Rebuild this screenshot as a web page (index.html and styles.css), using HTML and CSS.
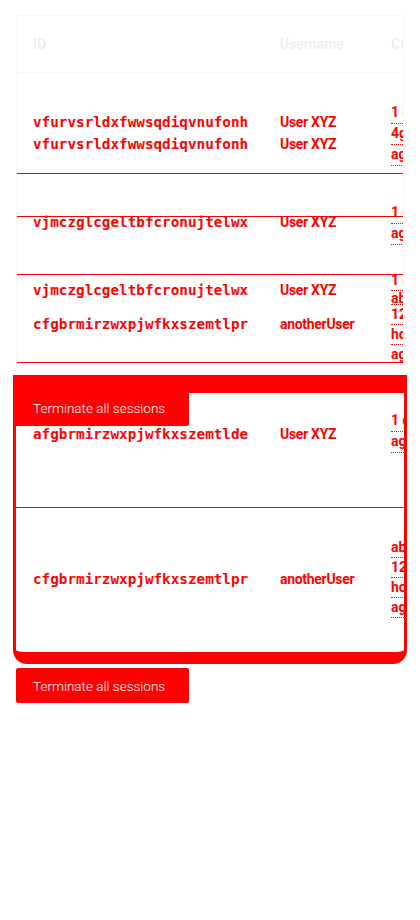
FILE: index.html
```html
<!DOCTYPE html>
<html>
<head>
<meta charset="utf-8">
<link rel="stylesheet" href="styles.css">
</head>
<body>
<div class="page">
  <div class="card">
    <div class="row head">
      <div class="c-id">ID</div>
      <div class="c-user">Username</div>
      <div class="c-cr">Created</div>
    </div>
    <div class="row r1">
      <div class="c-id"><div class="id">vfurvsrldxfwwsqdiqvnufonh</div><div class="id">vfurvsrldxfwwsqdiqvnufonh</div></div>
      <div class="c-user"><div class="id">User XYZ</div><div class="id">User XYZ</div></div>
      <div class="c-cr"><span class="dt">1 day</span><span class="dt">4g</span><span class="dt">ago</span></div>
    </div>
    <div class="row r2">
      <div class="overline"></div>
      <div class="c-id"><div class="id">vjmczglcgeltbfcronujtelwx</div></div>
      <div class="c-user"><div class="id">User XYZ</div></div>
      <div class="c-cr"><span class="dt">1 day</span><span class="dt">ago</span></div>
    </div>
    <div class="row r3">
      <div class="c-id"><div class="id">vjmczglcgeltbfcronujtelwx</div><div class="id">cfgbrmirzwxpjwfkxszemtlpr</div></div>
      <div class="c-user"><div class="id">User XYZ</div><div class="id">anotherUser</div></div>
      <div class="c-cr"><span class="dt s1">1 day</span><span class="dt s2">about</span><span class="dt">12</span><span class="dt">hours</span><span class="dt">ago</span></div>
    </div>
  </div>

  <div class="box">
    <button class="term over">Terminate all sessions</button>
    <div class="inner">
      <div class="row r4">
        <div class="c-id"><div class="id">afgbrmirzwxpjwfkxszemtlde</div></div>
        <div class="c-user"><div class="id">User XYZ</div></div>
        <div class="c-cr"><span class="dt">1 day</span><span class="dt">ago</span></div>
      </div>
      <div class="row r5">
        <div class="c-id"><div class="id">cfgbrmirzwxpjwfkxszemtlpr</div></div>
        <div class="c-user"><div class="id">anotherUser</div></div>
        <div class="c-cr"><span class="dt">about</span><span class="dt">12</span><span class="dt">hours</span><span class="dt">ago</span></div>
      </div>
    </div>
  </div>
  <button class="term bottom">Terminate all sessions</button>
</div>
</body>
</html>
```
FILE: styles.css
```css
* { box-sizing: border-box; }
html, body { margin: 0; padding: 0; background: #fff; }
body { font-family: Roboto, "Liberation Sans", sans-serif; width: 420px; height: 920px; overflow: hidden; }
.page { padding: 15px 0 0 0; }

.card {
  margin: 0 16px;
  width: 388px;
  border: 1px solid #f8f8f8;
  border-bottom: none;
  overflow: hidden;
  background: #fff;
}
.row {
  display: grid;
  grid-template-columns: 248px 111px 140px;
  padding-left: 15px;
  position: relative;
  width: 520px;
}
.head {
  height: 57px;
  align-items: center;
  border-bottom: 1px solid #f6f6f6;
  color: #ededed;
  font-weight: 500;
  font-size: 14px;
}
.head .c-id { padding-left: 1px; }

.c-id .id, .c-user .id {
  color: #ff0000;
  font-weight: 700;
  line-height: 22px;
  white-space: nowrap;
}
.c-id .id {
  font-family: "DejaVu Sans Mono", "Liberation Mono", monospace;
  font-size: 14.3px;
  padding-left: 1px;
}
.c-user .id { font-size: 14px; letter-spacing: -0.3px; }
.c-cr { display: flex; flex-direction: column; align-items: flex-start; }
.dt {
  color: #ff0000;
  font-weight: 700;
  font-size: 14px;
  line-height: 18px;
  height: 21px;
  border-bottom: 1px dotted #ff0000;
  white-space: nowrap;
}

.r1 { height: 101px; border-bottom: 1px solid #ff0000; }
.r1 .c-id, .r1 .c-user { padding-top: 38px; }
.r1 .c-cr { padding-top: 30px; }

.r2 { height: 101px; border-bottom: 1px solid #ff0000; }
.r2 .overline { position: absolute; left: 0; top: 42px; width: 388px; height: 1px; background: #ff0000; }
.r2 .c-id, .r2 .c-user { padding-top: 37px; }
.r2 .c-cr { padding-top: 29px; }

.r3 { height: 88px; border-bottom: 1px solid #ff0000; }
.r3 .c-id, .r3 .c-user { padding-top: 4px; }
.r3 .c-id .id + .id, .r3 .c-user .id + .id { margin-top: 12px; }
.r3 .c-cr { padding-top: 0; margin-top: -4px; }
.r3 .dt { height: 20px; }
.r3 .dt.s2 { height: 14px; line-height: 14px; }

.box {
  position: relative;
  margin: 12px 0 0 13px;
  width: 394px;
  border: 3px solid #ff0000;
  border-top-width: 18px;
  border-bottom-width: 12px;
  border-radius: 0 0 14px 14px;
  background: #fff;
}
.inner { overflow: hidden; width: 388px; }
.box .row { padding-left: 16px; }
.r4 { height: 115px; border-bottom: 1px solid #ff0000; }
.r4 .c-id, .r4 .c-user { padding-top: 30px; }
.r4 .c-cr { padding-top: 18px; }
.r5 { height: 144px; }
.r5 .c-id, .r5 .c-user { padding-top: 60px; }
.r5 .c-cr { padding-top: 30px; }
.r5 .dt { height: 20px; }

.term {
  display: block;
  background: #ff0000;
  color: #fff;
  border: none;
  font-family: Roboto, "Liberation Sans", sans-serif;
  font-size: 13.5px;
  font-weight: 300;
  text-align: left;
  padding: 0 0 0 17px;
  width: 173px;
  border-radius: 2px;
}
.term.over {
  position: absolute;
  left: 0;
  top: 0;
  height: 33px;
  padding-bottom: 4px;
  border-radius: 0 0 2px 0;
  z-index: 2;
}
.term.bottom {
  margin: 4px 0 0 16px;
  height: 35px;
}
```
